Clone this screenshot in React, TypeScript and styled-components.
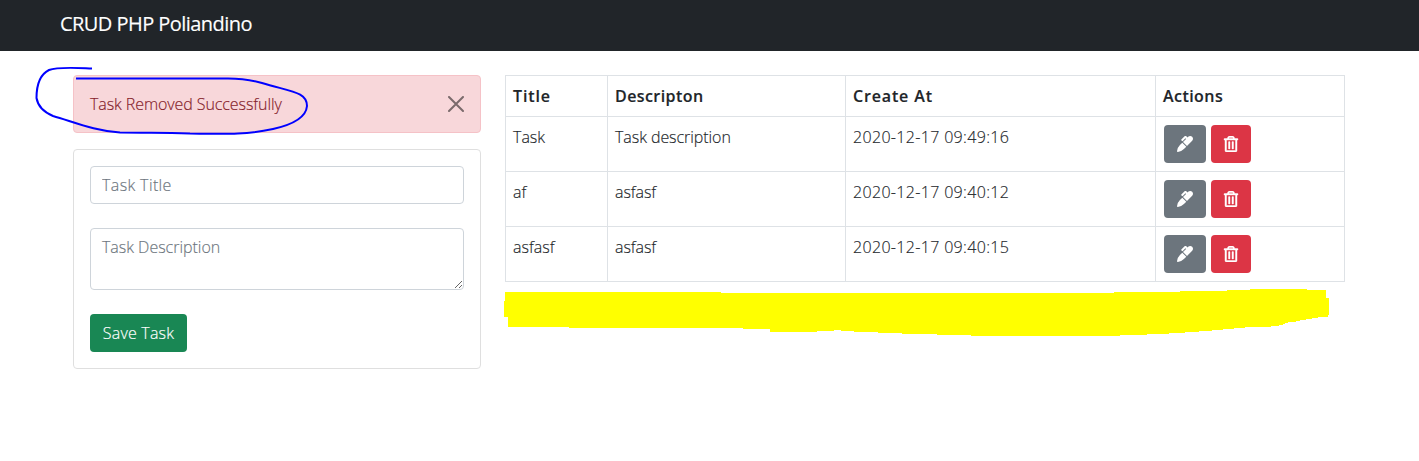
import React from "react";
import styled, { createGlobalStyle } from "styled-components";
import { FaMarker, FaRegTrashAlt } from "react-icons/fa";

const GlobalStyle = createGlobalStyle`
  *, *::before, *::after { box-sizing: border-box; }
  body {
    margin: 0;
    background: #fff;
    color: #212529;
    font-family: "Open Sans", "Noto Sans", sans-serif;
    font-size: 16px;
    font-weight: 300;
    line-height: 24px;
    -webkit-text-stroke: 0.15px;
  }
`;

const Page = styled.div`
  position: relative;
  height: 461px;
  overflow: hidden;
`;

const Navbar = styled.nav`
  height: 51px;
  padding: 9px 60px 0;
  background: #212529;
`;

const Brand = styled.a`
  color: #fff;
  font-size: 20px;
  font-weight: 400;
  line-height: 30px;
  white-space: nowrap;
`;

const Text = styled.span<{ $spacing?: number }>`
  letter-spacing: ${(p) => p.$spacing ?? 0}px;
  white-space: nowrap;
`;

const Main = styled.main`
  display: flex;
  align-items: flex-start;
  gap: 24px;
  padding: 24px 74px 0 73px;
`;

const Sidebar = styled.div`
  flex: 0 0 408px;
  display: flex;
  flex-direction: column;
  gap: 16px;
`;

const Alert = styled.div`
  display: flex;
  align-items: center;
  justify-content: space-between;
  height: 58px;
  padding: 0 16px;
  border: 1px solid #f5c2c7;
  border-radius: 4px;
  background: #f8d7da;
  color: #842029;
`;

const CloseButton = styled.button`
  display: flex;
  padding: 0;
  border: 0;
  background: none;
  color: #000;
  opacity: 0.5;
`;

const Card = styled.form`
  display: flex;
  flex-direction: column;
  align-items: flex-start;
  gap: 24px;
  height: 220px;
  padding: 16px;
  border: 1px solid #dfdfdf;
  border-radius: 4px;
`;

const Field = styled.input<{ $spacing: number }>`
  display: block;
  width: 374px;
  height: ${(p) => (p.as === "textarea" ? 62 : 38)}px;
  padding: 6px 11px;
  border: 1px solid #ced4da;
  border-radius: 4px;
  background: #fff;
  font: inherit;
  letter-spacing: ${(p) => p.$spacing}px;
  &::placeholder { color: #6c757d; opacity: 1; }
`;

const Button = styled.button<{ $color: string; $width: number }>`
  display: inline-flex;
  align-items: center;
  justify-content: center;
  width: ${(p) => p.$width}px;
  height: 38px;
  padding: 0;
  border: 0;
  border-radius: 4px;
  background: ${(p) => p.$color};
  color: #fff;
  font: inherit;
`;

const TrashIcon = styled(FaRegTrashAlt)`
  stroke: currentColor;
  stroke-width: 14px;
`;

const Table = styled.table`
  width: 840px;
  table-layout: fixed;
  border-collapse: collapse;
`;

const Column = styled.col<{ $width: number }>`
  width: ${(p) => p.$width}px;
`;

const Row = styled.tr<{ $height: number }>`
  height: ${(p) => p.$height}px;
`;

const HeadCell = styled.th`
  padding: 8px 7px 7px;
  border: 1px solid #dee2e6;
  font-weight: 600;
  text-align: left;
  vertical-align: top;
`;

const Cell = styled.td`
  padding: 8px 7px 7px;
  border: 1px solid #dee2e6;
  vertical-align: top;
`;

const Actions = styled.div`
  display: flex;
  gap: 5px;
  margin-left: 1px;
`;

const Markup = styled.svg`
  position: absolute;
  top: 0;
  left: 0;
  pointer-events: none;
`;

const columns = [
  { label: "Title", width: 102, spacing: 0.85 },
  { label: "Descripton", width: 238, spacing: 0.42 },
  { label: "Create At", width: 310, spacing: 0.85 },
  { label: "Actions", width: 189, spacing: 0.45 },
];

const tasks = [
  { title: "Task", description: "Task description", created: "2020-12-17 09:49:16" },
  { title: "af", description: "asfasf", created: "2020-12-17 09:40:12" },
  { title: "asfasf", description: "asfasf", created: "2020-12-17 09:40:15" },
];

export default function App() {
  return (
    <Page>
      <GlobalStyle />
      <Navbar>
        <Brand><Text $spacing={-0.55}>CRUD PHP Poliandino</Text></Brand>
      </Navbar>
      <Main>
        <Sidebar>
          <Alert role="alert">
            <Text $spacing={-0.08}>Task Removed Successfully</Text>
            <CloseButton aria-label="Close">
              <svg width="16" height="16" viewBox="0 0 16 16" stroke="currentColor" strokeWidth="2" strokeLinecap="round">
                <path d="M1 1L15 15M15 1L1 15" />
              </svg>
            </CloseButton>
          </Alert>
          <Card>
            <Field $spacing={0.38} placeholder="Task Title" />
            <Field as="textarea" $spacing={-0.02} placeholder="Task Description" />
            <Button type="button" $color="#198754" $width={97}><Text $spacing={0.2}>Save Task</Text></Button>
          </Card>
        </Sidebar>
        <Table>
          <colgroup>
            {columns.map((c) => <Column key={c.label} $width={c.width} />)}
          </colgroup>
          <thead>
            <Row $height={41}>
              {columns.map((c) => (
                <HeadCell key={c.label}><Text $spacing={c.spacing}>{c.label}</Text></HeadCell>
              ))}
            </Row>
          </thead>
          <tbody>
            {tasks.map((t) => (
              <Row key={t.created} $height={55}>
                <Cell><Text>{t.title}</Text></Cell>
                <Cell><Text $spacing={-0.06}>{t.description}</Text></Cell>
                <Cell><Text $spacing={0.33}>{t.created}</Text></Cell>
                <Cell>
                  <Actions>
                    <Button $color="#6c757d" $width={42} aria-label="Edit"><FaMarker size={16} /></Button>
                    <Button $color="#dc3545" $width={40} aria-label="Delete"><TrashIcon size={16} /></Button>
                  </Actions>
                </Cell>
              </Row>
            ))}
          </tbody>
        </Table>
      </Main>
      <Markup width="1419" height="461" viewBox="0 0 1419 461" fill="none">
        <path
          d="M92 68.5C78 68 58 66.500 49 70C39 75 36.500 86 36.500 98C38 107 46 113 53 116C74 122 95 131 120 132.500C150 133 160 132 190 133.500C225 134 245 135 273 129C291 125 306 118 307 106C307 92 292 92 262 83C248 79 240 78.500 228 78.500H76"
          stroke="#00f"
          strokeWidth="2"
        />
        <path
          fill="#ff0"
          shapeRendering="crispEdges"
          d="M505 292H721V293H1114V292H1180V291H1227V290H1250V289H1307V290H1326V298H1329V315H1328V317H1318V318H1312V319H1306V320H1300V321H1296V322H1288V323H1285V324H1283V325H1279V326H1271V327H1245V328H1234V329H1223V330H1212V331H1199V332H1185V333H1169V334H1147V335H1120V336H971V335H937V334H902V333H878V332H854V331H841V330H834V331H817V332H770V329H743V328H569V327H508V317H504V301H505Z"
        />
      </Markup>
    </Page>
  );
}
